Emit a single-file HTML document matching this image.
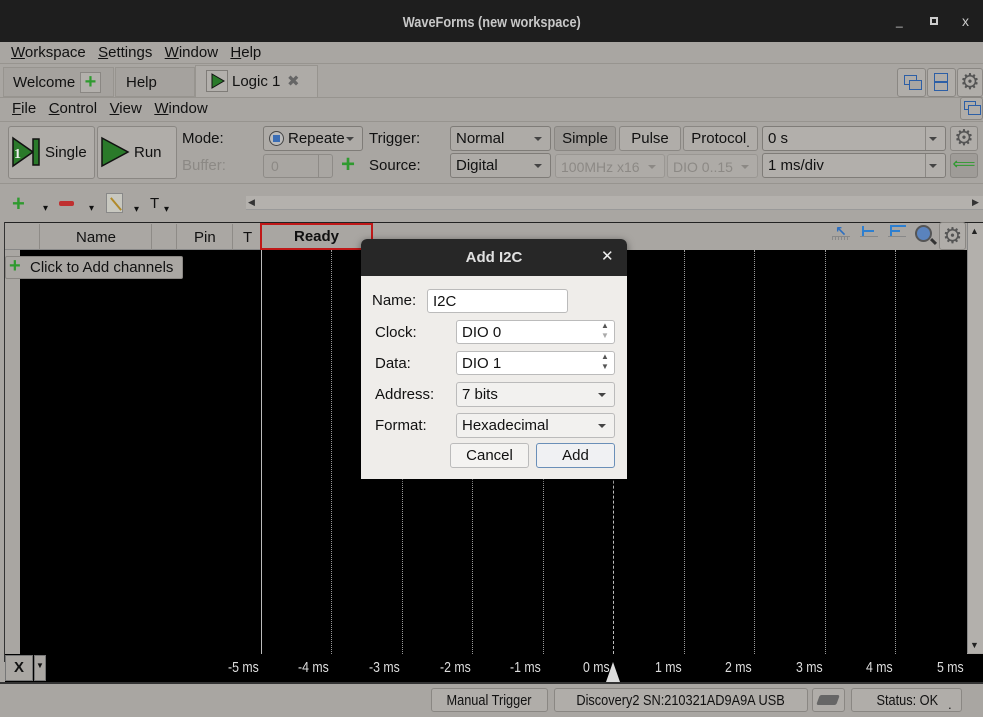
<!DOCTYPE html>
<html><head><meta charset="utf-8">
<style>
*{box-sizing:border-box;margin:0;padding:0}
body{width:983px;height:714px;overflow:hidden;background:#a9a6a2;font-family:"Liberation Sans","DejaVu Sans",sans-serif;font-size:14px;color:#111;position:relative}
.a{position:absolute}
.btn{position:absolute;border:1px solid #8a8783;border-radius:3px;background:#b0ada9;text-align:center}
.cb{position:absolute;border:1px solid #7f7c78;border-radius:3px;background:#aeaba7;padding-left:5px;line-height:24px}
.cb:after{content:"";position:absolute;right:8px;top:10px;border-left:4px solid transparent;border-right:4px solid transparent;border-top:4px solid #444}
.dis{color:#8c8985}
.dis:after{border-top-color:#8c8985}
u{text-decoration:underline}
.vl{position:absolute;top:250px;height:404px;width:0;border-left:1px dotted #999}
.tk{position:absolute;top:659px;color:#ddd;font-size:15px;transform:scaleX(.82);transform-origin:left}
.fld{position:absolute;background:#fff;border:1px solid #bbb;border-radius:3px;padding-left:5px;line-height:23px;height:24px}
.nar{display:inline-block;transform:scaleX(.85);transform-origin:center}
</style></head><body>
<!-- title -->
<div class="a" style="left:0;top:0;width:983px;height:42px;background:#1e1e1e;color:#c8c8c8;text-align:center;line-height:46px;font-weight:bold;font-size:15px"><span class="nar">WaveForms (new workspace)</span></div>
<div class="a" style="left:896px;top:14px;color:#ccc;font-size:12px">_</div>
<div class="a" style="left:930px;top:17px;width:8px;height:8px;border:2px solid #ccc"></div>
<div class="a" style="left:962px;top:13px;color:#ccc;font-size:14px">x</div>
<!-- menubar -->
<div class="a" style="left:11px;top:44px;font-size:15px;word-spacing:2px"><span><u>W</u>orkspace</span>&nbsp; <span><u>S</u>ettings</span>&nbsp; <span><u>W</u>indow</span>&nbsp; <span><u>H</u>elp</span></div>
<div class="a" style="left:0;top:63px;width:983px;height:1px;background:#97948f"></div>
<!-- tabs -->
<div class="a" style="left:3px;top:67px;width:111px;height:30px;border:1px solid #97948f;background:#a5a29e"></div>
<div class="a" style="left:13px;top:74px;font-size:15px">Welcome</div>
<div class="a" style="left:80px;top:72px;width:21px;height:21px;border:1px solid #8a8783;background:#b3b0ac;color:#2f9a2f;font-weight:bold;font-size:20px;line-height:18px;text-align:center">+</div>
<div class="a" style="left:115px;top:67px;width:80px;height:30px;border:1px solid #97948f;background:#a5a29e"></div>
<div class="a" style="left:126px;top:74px;font-size:15px">Help</div>
<div class="a" style="left:195px;top:65px;width:123px;height:33px;border:1px solid #97948f;border-bottom:none;background:#aeaba7"></div>
<div class="a" style="left:206px;top:70px;width:22px;height:22px;border:1px solid #7f7c78;background:#b3b0ac"></div>
<svg class="a" style="left:210px;top:73px" width="16" height="16"><path d="M2 1 L14 8 L2 15Z" fill="#2a7a2a" stroke="#111"/></svg>
<div class="a" style="left:232px;top:73px;font-size:15px">Logic 1</div>
<div class="a" style="left:287px;top:72px;color:#666;font-size:15px">✖</div>
<div class="a" style="left:0;top:97px;width:983px;height:1px;background:#97948f"></div>
<div class="btn" style="left:897px;top:68px;width:29px;height:29px"></div>
<div class="btn" style="left:927px;top:68px;width:29px;height:29px"></div>
<div class="btn" style="left:957px;top:68px;width:26px;height:29px;color:#555;font-size:22px;line-height:26px">⚙</div>
<div class="a" style="left:904px;top:75px;width:13px;height:10px;border:1.5px solid #2d5fa6"></div>
<div class="a" style="left:909px;top:80px;width:13px;height:10px;border:1.5px solid #2d5fa6;background:#a9a6a2"></div>
<div class="a" style="left:934px;top:73px;width:14px;height:18px;border:1.5px solid #2d5fa6"></div>
<div class="a" style="left:934px;top:81px;width:14px;height:1.5px;background:#2d5fa6"></div>
<!-- sub menu -->
<div class="a" style="left:12px;top:100px;font-size:15px"><u>F</u>ile&nbsp;&nbsp; <u>C</u>ontrol&nbsp;&nbsp; <u>V</u>iew&nbsp;&nbsp; <u>W</u>indow</div>
<div class="btn" style="left:960px;top:97px;width:23px;height:23px"></div>
<div class="a" style="left:964px;top:101px;width:12px;height:9px;border:1.5px solid #2d5fa6"></div>
<div class="a" style="left:968px;top:105px;width:13px;height:10px;border:1.5px solid #2d5fa6;background:#b0ada9"></div>
<div class="a" style="left:0;top:121px;width:983px;height:1px;background:#97948f"></div>
<!-- toolbar -->
<div class="btn" style="left:8px;top:126px;width:87px;height:53px"></div>
<svg class="a" style="left:11px;top:136px" width="30" height="32"><path d="M2 2 L22 16 L22 3 L28 3 L28 29 L22 29 L22 16 L2 30Z" fill="#2a7a2a" stroke="#111" stroke-width="1.5"/><text x="3" y="22" font-size="14" font-weight="bold" fill="#eee" font-family="Liberation Serif">1</text></svg>
<div class="a" style="left:45px;top:144px;font-size:15px">Single</div>
<div class="btn" style="left:97px;top:126px;width:80px;height:53px"></div>
<svg class="a" style="left:100px;top:136px" width="30" height="32"><path d="M2 2 L28 16 L2 30Z" fill="#2a7a2a" stroke="#111" stroke-width="1.5"/></svg>
<div class="a" style="left:134px;top:144px;font-size:15px">Run</div>
<div class="a" style="left:182px;top:130px;font-size:15px">Mode:</div>
<div class="a dis" style="left:182px;top:157px;font-size:15px">Buffer:</div>
<div class="cb" style="left:263px;top:126px;width:100px;height:25px;padding-left:24px;font-size:15px">Repeate</div>
<div class="a" style="left:269px;top:131px;width:15px;height:15px;border:1.5px solid #444;border-radius:50%;background:#bbb"></div>
<div class="a" style="left:273px;top:135px;width:7px;height:7px;background:#3a6db5"></div>
<div class="a" style="left:263px;top:154px;width:70px;height:24px;border:1px solid #8e8b87;border-radius:3px;color:#8c8985;padding-left:7px;line-height:23px">0</div>
<div class="a" style="left:318px;top:155px;width:1px;height:22px;background:#8e8b87"></div>
<div class="a" style="left:341px;top:151px;color:#2f9a2f;font-size:24px;font-weight:bold">+</div>
<div class="a" style="left:369px;top:130px;font-size:15px">Trigger:</div>
<div class="a" style="left:369px;top:157px;font-size:15px">Source:</div>
<div class="cb" style="left:450px;top:126px;width:101px;height:25px;font-size:15px">Normal</div>
<div class="cb" style="left:450px;top:153px;width:101px;height:25px;font-size:15px">Digital</div>
<div class="btn" style="left:554px;top:126px;width:62px;height:25px;background:#9f9c98;line-height:23px;font-size:15px">Simple</div>
<div class="btn" style="left:619px;top:126px;width:62px;height:25px;line-height:23px;font-size:15px">Pulse</div>
<div class="btn" style="left:683px;top:126px;width:75px;height:25px;line-height:23px;font-size:15px">Protocol<sub>.</sub></div>
<div class="cb dis" style="left:555px;top:154px;width:110px;height:24px;border-color:#9a9793;font-size:14px">100MHz x16</div>
<div class="cb dis" style="left:667px;top:154px;width:91px;height:24px;border-color:#9a9793;font-size:14px">DIO 0..15</div>
<div class="cb" style="left:762px;top:126px;width:184px;height:25px;font-size:15px;background:#b2afab">0 s</div>
<div class="a" style="left:925px;top:127px;width:1px;height:23px;background:#8a8783"></div>
<div class="cb" style="left:762px;top:153px;width:184px;height:25px;font-size:15px;background:#b2afab">1 ms/div</div>
<div class="a" style="left:925px;top:154px;width:1px;height:23px;background:#8a8783"></div>
<div class="btn" style="left:950px;top:126px;width:28px;height:25px;color:#555;font-size:22px;line-height:22px">⚙</div>
<div class="btn" style="left:950px;top:153px;width:28px;height:25px;background:#9f9c98;color:#2f9a2f;font-size:16px;line-height:22px">⟸</div>
<div class="a" style="left:0;top:183px;width:983px;height:1px;background:#97948f"></div>
<!-- icons row -->
<div class="a" style="left:12px;top:191px;color:#2f9a2f;font-size:22px;font-weight:bold">+</div>
<div class="a" style="left:43px;top:203px;font-size:10px">▾</div>
<div class="a" style="left:59px;top:201px;width:15px;height:5px;background:#c03030;border-radius:2px"></div>
<div class="a" style="left:89px;top:203px;font-size:10px">▾</div>
<div class="a" style="left:106px;top:193px;width:17px;height:20px;border:1px solid #888;background:#c8c8c0"></div>
<div class="a" style="left:108px;top:203px;width:16px;height:2px;background:#b08a2a;transform:rotate(50deg)"></div>
<div class="a" style="left:134px;top:204px;font-size:10px">▾</div>
<div class="a" style="left:150px;top:195px;font-size:15px">T</div>
<div class="a" style="left:164px;top:204px;font-size:10px">▾</div>
<div class="a" style="left:246px;top:196px;width:737px;height:14px;background:#b4b1ad;border-bottom:1px solid #999"></div>
<div class="a" style="left:248px;top:197px;font-size:9px;color:#333">◀</div>
<div class="a" style="left:972px;top:197px;font-size:9px;color:#333">▶</div>
<!-- table header -->
<div class="a" style="left:4px;top:222px;width:979px;height:1px;background:#222"></div>
<div class="a" style="left:4px;top:222px;width:1px;height:440px;background:#333"></div>
<div class="a" style="left:5px;top:223px;width:255px;height:27px;background:#aaa7a3;border-bottom:1px solid #888"></div>
<div class="a" style="left:39px;top:224px;width:1px;height:26px;background:#8e8b87"></div>
<div class="a" style="left:151px;top:224px;width:1px;height:26px;background:#8e8b87"></div>
<div class="a" style="left:176px;top:224px;width:1px;height:26px;background:#8e8b87"></div>
<div class="a" style="left:232px;top:224px;width:1px;height:26px;background:#8e8b87"></div>
<div class="a" style="left:76px;top:229px;font-size:15px">Name</div>
<div class="a" style="left:194px;top:229px;font-size:15px">Pin</div>
<div class="a" style="left:243px;top:229px;font-size:15px">T</div>
<div class="a" style="left:260px;top:223px;width:113px;height:27px;border:2px solid #c01818;text-align:center;font-weight:bold;font-size:15px;line-height:24px">Ready</div>
<!-- header right icons -->
<div class="a" style="left:832px;top:236px;width:18px;height:4px;border-top:1px solid #888;background:repeating-linear-gradient(90deg,#888 0 1px,transparent 1px 3px)"></div>
<div class="a" style="left:835px;top:223px;color:#2d6fc0;font-size:14px;font-weight:bold">↖</div>
<div class="a" style="left:860px;top:236px;width:18px;height:4px;border-top:1px solid #888"></div>
<div class="a" style="left:862px;top:226px;width:2px;height:10px;background:#2d7fd0"></div>
<div class="a" style="left:862px;top:230px;width:12px;height:2px;background:#2d7fd0"></div>
<div class="a" style="left:888px;top:236px;width:18px;height:4px;border-top:1px solid #888"></div>
<div class="a" style="left:890px;top:225px;width:2px;height:11px;background:#2d7fd0"></div>
<div class="a" style="left:890px;top:225px;width:16px;height:2px;background:#2d7fd0"></div>
<div class="a" style="left:890px;top:230px;width:10px;height:2px;background:#2d7fd0"></div>
<div class="a" style="left:915px;top:225px;width:17px;height:17px;border:2px solid #555;border-radius:50%;background:#5a83bd"></div>
<div class="a" style="left:930px;top:240px;width:7px;height:3px;background:#333;transform:rotate(45deg)"></div>
<div class="btn" style="left:939px;top:222px;width:27px;height:28px;color:#555;font-size:22px;line-height:25px">⚙</div>
<div class="a" style="left:967px;top:223px;width:16px;height:430px;background:#b3b0ac;border-left:1px solid #888"></div>
<div class="a" style="left:970px;top:226px;font-size:9px;color:#222">▲</div>
<div class="a" style="left:970px;top:640px;font-size:9px;color:#222">▼</div>
<!-- plot -->
<div class="a" style="left:20px;top:250px;width:947px;height:404px;background:#000"></div>
<div class="a" style="left:5px;top:250px;width:15px;height:404px;background:#a9a6a2"></div>
<div class="a" style="left:261px;top:250px;width:1px;height:404px;background:#bbb"></div>
<div class="vl" style="left:331px"></div><div class="vl" style="left:402px"></div><div class="vl" style="left:472px"></div><div class="vl" style="left:543px"></div>
<div class="vl" style="left:613px;border-left:1px dashed #bbb"></div>
<div class="vl" style="left:684px"></div><div class="vl" style="left:754px"></div><div class="vl" style="left:825px"></div><div class="vl" style="left:895px"></div>
<div class="a" style="left:5px;top:256px;width:178px;height:23px;border:1px solid #8a8783;border-radius:2px;background:#aaa7a3;font-size:15px;line-height:21px;padding-left:24px">Click to Add channels</div>
<div class="a" style="left:9px;top:255px;color:#2f9a2f;font-size:20px;font-weight:bold">+</div>
<!-- axis -->
<div class="a" style="left:5px;top:654px;width:978px;height:28px;background:#000"></div>
<div class="a" style="left:5px;top:655px;width:28px;height:26px;background:#aaa7a3;border:1px solid #777;font-weight:bold;text-align:center;line-height:24px;font-size:15px">X</div>
<div class="a" style="left:34px;top:655px;width:12px;height:26px;background:#aaa7a3;border:1px solid #777;font-size:8px;text-align:center;line-height:20px">▼</div>
<div class="tk" style="left:228px">-5 ms</div><div class="tk" style="left:298px">-4 ms</div><div class="tk" style="left:369px">-3 ms</div><div class="tk" style="left:440px">-2 ms</div><div class="tk" style="left:510px">-1 ms</div><div class="tk" style="left:583px">0 ms</div><div class="tk" style="left:655px">1 ms</div><div class="tk" style="left:725px">2 ms</div><div class="tk" style="left:796px">3 ms</div><div class="tk" style="left:866px">4 ms</div><div class="tk" style="left:937px">5 ms</div>
<svg class="a" style="left:603px;top:662px" width="20" height="20"><path d="M10 0 L17 20 L3 20Z" fill="#ddd"/></svg>
<!-- status -->
<div class="a" style="left:0;top:682px;width:983px;height:2px;background:#333"></div>
<div class="btn" style="left:431px;top:688px;width:117px;height:24px;line-height:23px;font-size:15px"><span class="nar">Manual Trigger</span></div>
<div class="btn" style="left:554px;top:688px;width:254px;height:24px;line-height:23px;font-size:15px;white-space:nowrap"><span class="nar">Discovery2 SN:210321AD9A9A USB</span></div>
<div class="btn" style="left:812px;top:688px;width:33px;height:24px"></div>
<div class="a" style="left:818px;top:695px;width:20px;height:10px;background:#666;border-radius:2px;transform:skewX(-20deg)"></div>
<div class="btn" style="left:851px;top:688px;width:111px;height:24px;line-height:23px;font-size:15px;padding-left:10px"><span class="nar">Status: OK</span> <sub>.</sub></div>
<!-- dialog -->
<div class="a" style="left:361px;top:239px;width:266px;height:240px;border-radius:6px 6px 0 0;background:#efedea;box-shadow:0 2px 8px rgba(0,0,0,.5);overflow:hidden">
<div class="a" style="left:0;top:0;width:266px;height:37px;background:#272727;color:#e0e0e0;font-weight:bold;text-align:center;line-height:38px;font-size:15px">Add I2C</div>
<div class="a" style="left:240px;top:8px;color:#eee;font-size:15px;font-weight:bold">✕</div>
<div class="a" style="left:11px;top:53px;font-size:15px">Name:</div>
<div class="fld" style="left:66px;top:50px;width:141px;font-size:15px">I2C</div>
<div class="a" style="left:14px;top:85px;font-size:15px">Clock:</div>
<div class="fld" style="left:95px;top:81px;width:159px;font-size:15px">DIO 0</div>
<div class="a" style="left:240px;top:82px;font-size:8px;color:#555;line-height:10px">▲<br><span style="color:#aaa">▼</span></div>
<div class="a" style="left:14px;top:116px;font-size:15px">Data:</div>
<div class="fld" style="left:95px;top:112px;width:159px;font-size:15px">DIO 1</div>
<div class="a" style="left:240px;top:113px;font-size:8px;color:#555;line-height:10px">▲<br>▼</div>
<div class="a" style="left:14px;top:147px;font-size:15px">Address:</div>
<div class="cb" style="left:95px;top:143px;width:159px;height:25px;background:#f2f1ef;border-color:#bbb;font-size:15px">7 bits</div>
<div class="a" style="left:14px;top:178px;font-size:15px">Format:</div>
<div class="cb" style="left:95px;top:174px;width:159px;height:25px;background:#f2f1ef;border-color:#bbb;font-size:15px">Hexadecimal</div>
<div class="btn" style="left:89px;top:204px;width:79px;height:25px;background:#f4f3f1;border-color:#bbb;line-height:23px;font-size:15px">Cancel</div>
<div class="btn" style="left:175px;top:204px;width:79px;height:25px;background:#f0f1f3;border-color:#6a8fb8;line-height:23px;font-size:15px">Add</div>
</div>
</body></html>
